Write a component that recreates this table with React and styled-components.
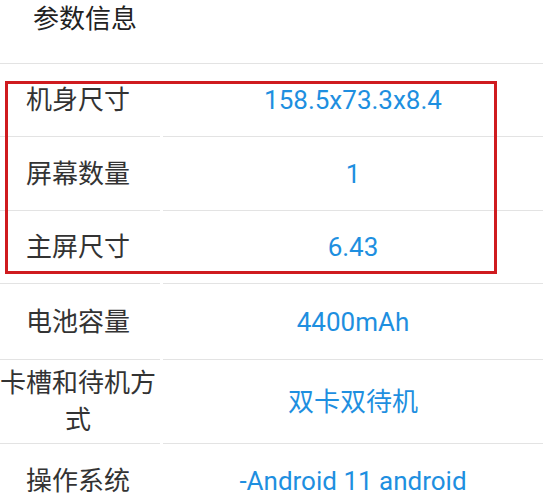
import React from "react";
import styled, { createGlobalStyle } from "styled-components";

const Global = createGlobalStyle`
  html, body {
    margin: 0;
    padding: 0;
    background: #ffffff;
  }
  body {
    font-family: Roboto, "Noto Sans CJK SC", "Noto Sans", sans-serif;
  }
`;

const Page = styled.div`
  position: relative;
  width: 543px;
  height: 496px;
  overflow: hidden;
  background: #fff;
`;

const Header = styled.div`
  height: 64px;
  box-sizing: border-box;
  padding: 2px 0 0 33px;
  border-bottom: 1px solid #e3e3e3;
  font-size: 26px;
  line-height: 34px;
  color: #222;
`;

const Table = styled.div`
  display: flex;
  flex-direction: column;
`;

const Row = styled.div`
  display: grid;
  grid-template-columns: 160px 1fr;
  column-gap: 3px;
`;

const Cell = styled.div`
  box-sizing: border-box;
  min-height: ${(p) => p.$h || 74}px;
  padding: 5px 0 4px;
  display: flex;
  align-items: center;
  justify-content: center;
  text-align: center;
  font-size: 26px;
  line-height: 37px;
  border-bottom: 1px solid #e3e3e3;
`;

const Label = styled(Cell)`
  padding-right: 4px;
  color: #333;
`;

const Value = styled(Cell)`
  color: #1e8fe0;
`;

const Highlight = styled.div`
  position: absolute;
  left: 5px;
  top: 81px;
  width: 492px;
  height: 193px;
  box-sizing: border-box;
  border: 3px solid #cf1b1f;
  pointer-events: none;
`;

const rows = [
  { k: "机身尺寸", v: "158.5x73.3x8.4", h: 73 },
  { k: "屏幕数量", v: "1", h: 74 },
  { k: "主屏尺寸", v: "6.43", h: 73 },
  { k: "电池容量", v: "4400mAh", h: 76 },
  { k: "卡槽和待机方式", v: "双卡双待机", h: 84 },
  { k: "操作系统", v: "-Android 11 android", h: 74 },
];

export default function App() {
  return (
    <Page>
      <Global />
      <Header>参数信息</Header>
      <Table>
        {rows.map((r) => (
          <Row key={r.k}>
            <Label $h={r.h}>{r.k}</Label>
            <Value $h={r.h}>{r.v}</Value>
          </Row>
        ))}
      </Table>
      <Highlight />
    </Page>
  );
}
